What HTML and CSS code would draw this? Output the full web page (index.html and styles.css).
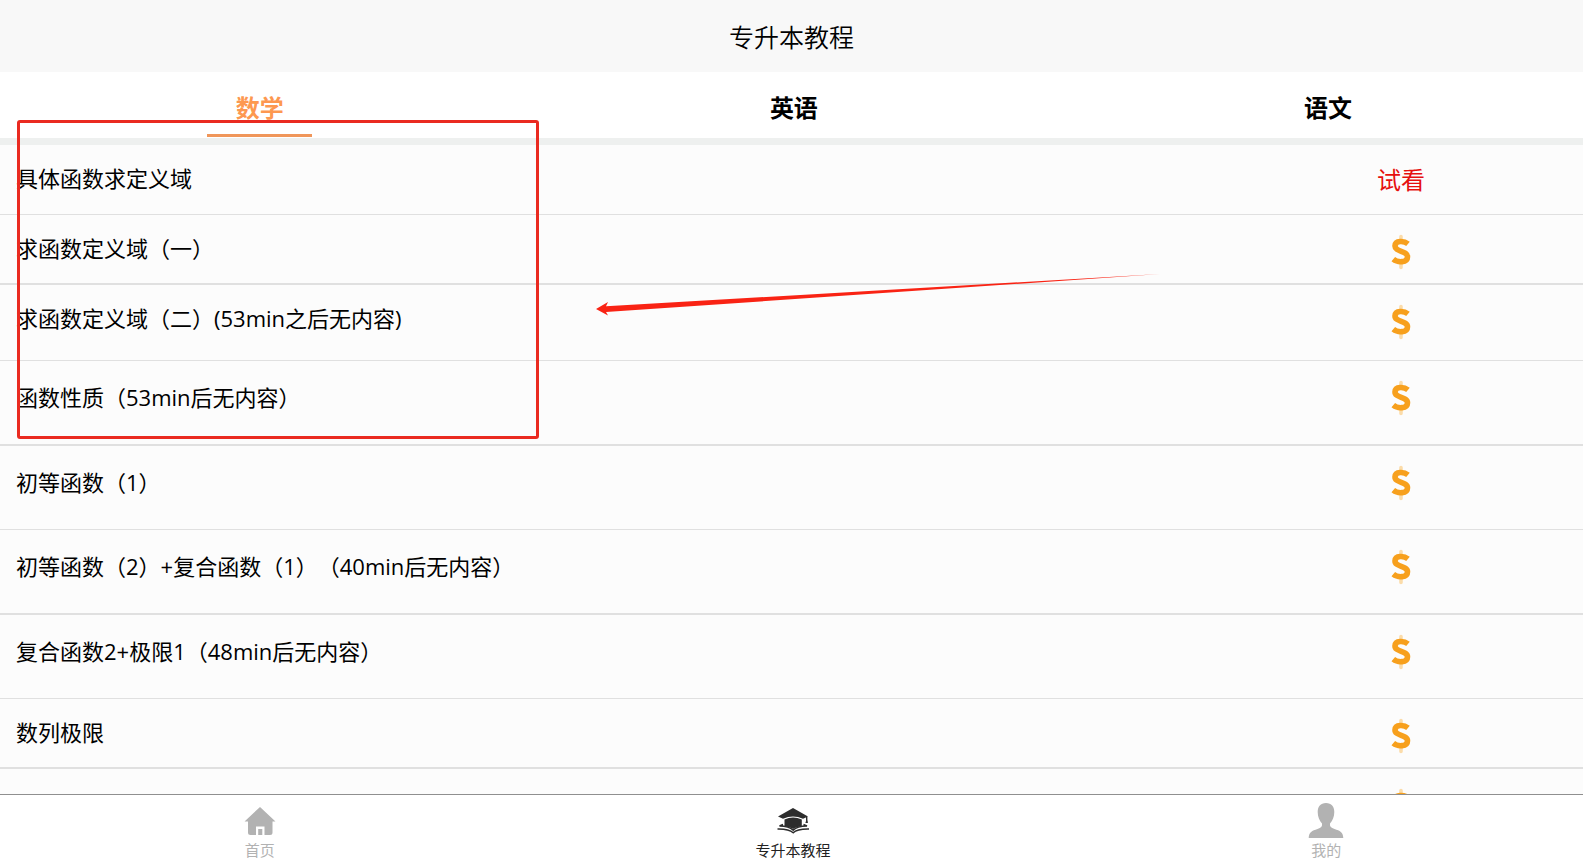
FILE: index.html
```html
<!DOCTYPE html>
<html lang="zh-CN">
<head>
<meta charset="utf-8">
<meta name="viewport" content="width=device-width, initial-scale=1">
<title>专升本教程</title>
<link rel="stylesheet" href="styles.css">
</head>
<body>
<svg class="defs" aria-hidden="true">
  <symbol id="coin" viewBox="0 0 20 36">
    <path d="M10 2.500V8M10 28V33.500" fill="none" stroke="#fbdcaa" stroke-width="3.600" stroke-linecap="round"/>
    <path d="M17 9.800C13.200 6.700 4.200 6 4 11.800C3.700 18.100 16.500 16.400 16.500 22.700C16.500 29 6.500 28.700 2.300 25.200" fill="none" stroke="#f7a01d" stroke-width="5.600"/>
  </symbol>
</svg>
<header class="title-bar"><h1 class="title">专升本教程</h1></header>
<nav class="tabs" aria-label="科目">
  <button class="tab tab-active" type="button">数学</button>
  <button class="tab" type="button">英语</button>
  <button class="tab" type="button">语文</button>
</nav>
<main class="content">
  <ul class="lessons">
    <li><a class="lesson" href="#"><span class="name">具体函数求定义域</span><span class="trial">试看</span></a></li>
    <li><a class="lesson thick" href="#"><span class="name">求函数定义域（一）</span><svg class="coin"><use href="#coin"/></svg></a></li>
    <li><a class="lesson medium" href="#"><span class="name">求函数定义域（二）(53min之后无内容)</span><svg class="coin"><use href="#coin"/></svg></a></li>
    <li><a class="lesson tall thick" href="#"><span class="name">函数性质（53min后无内容）</span><svg class="coin"><use href="#coin"/></svg></a></li>
    <li><a class="lesson tall" href="#"><span class="name">初等函数（1）</span><svg class="coin"><use href="#coin"/></svg></a></li>
    <li><a class="lesson tall thick" href="#"><span class="name">初等函数（2）+复合函数（1）（40min后无内容）</span><svg class="coin"><use href="#coin"/></svg></a></li>
    <li><a class="lesson tall" href="#"><span class="name">复合函数2+极限1（48min后无内容）</span><svg class="coin"><use href="#coin"/></svg></a></li>
    <li><a class="lesson thick" href="#"><span class="name">数列极限</span><svg class="coin"><use href="#coin"/></svg></a></li>
    <li><a class="lesson" href="#"><span class="name"></span><svg class="coin"><use href="#coin"/></svg></a></li>
  </ul>
</main>
<footer class="bottom-nav">
  <a class="nav-item" href="#">
    <svg class="nav-icon" viewBox="0 0 36 36"><path fill="#b2b2b2" d="M18 4L33.500 18.500H30.500V29.500Q30.500 32 28 32H8.500Q6 32 6 29.500V18.500H2.500Z"/><path fill="#fff" d="M14 23.500H22.500V32H14Z"/><path fill="#b2b2b2" d="M16.200 26H20.300V32H16.200Z"/></svg>
    <span>首页</span>
  </a>
  <a class="nav-item nav-active" href="#">
    <svg class="nav-icon" viewBox="0 0 36 36"><path fill="#2d2d2d" d="M18 5L33 13.500L28 15.800Q18 11 8 15.800L3 13.500Z"/><path fill="#2d2d2d" d="M9.500 16.600Q18 12.600 26.800 16.600V23.500Q21 23.800 18.200 26Q15 23.800 9.500 23.500Z"/><path fill="none" stroke="#2d2d2d" stroke-width="1.400" d="M31.700 14V19M8 21.500L4.500 23Q14 23.200 18.200 27.200Q22 23.200 32 23L28.500 21.500M2.500 26Q14 25.800 18.200 29.700Q22 25.800 34 26"/><path fill="#2d2d2d" d="M31.700 16L33 20H30.400Z"/></svg>
    <span>专升本教程</span>
  </a>
  <a class="nav-item" href="#">
    <svg class="nav-icon" viewBox="0 0 36 36"><path fill="#b2b2b2" d="M18 0C23.500 0 26.300 3.500 26.300 9C26.300 14 24.500 17.500 22 20.500C21.500 23.500 23 24.800 26.500 26C32 27.800 35 29 35.300 35H.7C1 29 4 27.800 9.500 26C13 24.800 14.500 23.500 14 20.500C11.500 17.500 9.700 14 9.700 9C9.700 3.500 12.500 0 18 0Z"/></svg>
    <span>我的</span>
  </a>
</footer>
<div class="mark-box"></div>
<svg class="mark-arrow" viewBox="0 0 564 42"><path fill="#f92314" d="M0 35L12 28L10 32.300L564 0L10 38L12 41.500Z"/></svg>
</body>
</html>
```

FILE: styles.css
```css
* { box-sizing: border-box; }

body {
  position: relative;
  display: flex;
  flex-direction: column;
  height: 100vh;
  margin: 0;
  overflow: hidden;
  background: #fff;
  color: #000;
  font-family: "Open Sans", "Noto Sans CJK SC", sans-serif;
  font-weight: 380;
  text-spacing-trim: space-all;
}

a { color: inherit; text-decoration: none; }

.defs { display: none; }

.title-bar {
  flex: none;
  padding: 19px 0 17px;
  background: #f8f8f8;
}

.title {
  margin: 0;
  font-size: 25px;
  font-weight: 350;
  line-height: 36px;
  text-align: center;
}

.tabs {
  flex: none;
  display: flex;
  justify-content: space-between;
  padding: 0 12.8% 1px 13.1%;
  border-bottom: 7px solid #eef0ef;
}

.tab {
  width: 105px;
  padding: 18px 0 8px;
  border: 0;
  border-bottom: 3px solid transparent;
  background: none;
  color: #000;
  font: 700 24px/36px "Noto Sans", "Noto Sans CJK SC", sans-serif;
}

.tab-active { border-color: #f0965a; color: #fd9850; }

.content {
  flex: 1;
  min-height: 0;
  overflow: hidden;
  background: #fcfcfc;
}

.lessons { margin: 0; padding: 0; list-style: none; }

.lesson {
  display: grid;
  grid-template-columns: 77% 23%;
  align-items: start;
  min-height: 70px;
  padding-top: 19px;
  border-bottom: 1px solid #e0e0e0;
}

.thick { border-bottom-width: 2px; }
.medium { min-height: 76px; }
.tall { min-height: 84px; }
.tall.thick { min-height: 85px; }

.name {
  padding-left: 16px;
  font-size: 22px;
  line-height: 29px;
}

.tall .name { line-height: 34px; }

.trial {
  color: #e60f0f;
  font-size: 24px;
  line-height: 32px;
  text-align: center;
}

.coin { width: 20px; height: 36px; justify-self: center; }

.bottom-nav {
  flex: none;
  display: flex;
  justify-content: space-between;
  padding: 8px 12.9% 0 13.1%;
  border-top: 1px solid #8f8f8f;
  background: #fff;
}

.nav-item {
  display: flex;
  flex-direction: column;
  align-items: center;
  gap: 2px;
  width: 105px;
  color: #b2b2b2;
  font-size: 15px;
  line-height: 19px;
}

.nav-active { color: #222; }

.nav-icon { width: 36px; height: 36px; }

.mark-box {
  position: absolute;
  top: 120px;
  left: 17px;
  width: 522px;
  height: 319px;
  border: 3px solid #ea2a20;
  border-radius: 3px;
  pointer-events: none;
}

.mark-arrow {
  position: absolute;
  top: 274px;
  left: 596px;
  width: 564px;
  height: 42px;
  pointer-events: none;
}
```
